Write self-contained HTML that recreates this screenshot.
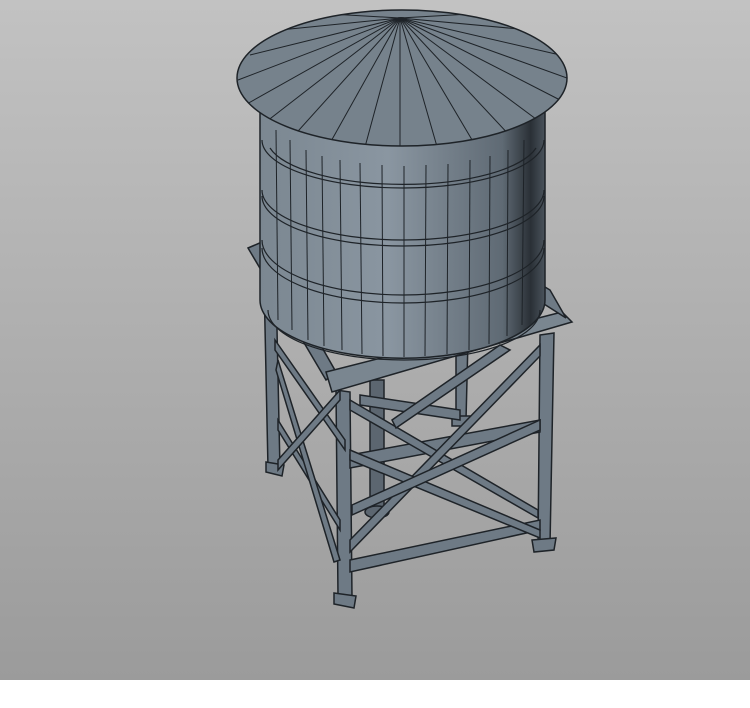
<!DOCTYPE html>
<html><head><style>
html,body{margin:0;padding:0;width:750px;height:708px;overflow:hidden;background:#fff}
.bg{position:absolute;left:0;top:0;width:750px;height:680px;background:linear-gradient(#c2c2c2,#9b9b9b)}
svg{position:absolute;left:0;top:0}
</style></head><body>
<div class="bg"></div>
<svg width="750" height="708" viewBox="0 0 750 708">
<defs>
<linearGradient id="tg" x1="0" x2="1">
<stop offset="0" stop-color="#7b8791"/><stop offset="0.45" stop-color="#8a96a1"/>
<stop offset="0.85" stop-color="#5f6a74"/><stop offset="0.95" stop-color="#2a3036"/><stop offset="1" stop-color="#4a535c"/>
</linearGradient>
<clipPath id="rc"><ellipse cx="402" cy="78" rx="165" ry="68"/></clipPath>
</defs>
<g stroke="#1e2328" stroke-width="1.5" fill="#6e7a85">
<polygon points="264,280 276,282 280,470 268,468"/>
<polygon points="336,390 350,392 352,598 338,596"/>
<polygon points="540,335 554,333 550,545 538,547"/>
<polygon points="456,340 468,340 466,420 456,420"/>
<polygon points="370,380 384,380 384,510 370,510" fill="#5c6670"/>
<ellipse cx="377" cy="512" rx="12" ry="6" fill="#5c6670"/>
<polygon points="266,462 284,465 282,476 266,472"/>
<polygon points="334,593 356,596 354,608 334,604"/>
<polygon points="532,540 556,538 554,550 534,552"/>
<polygon points="452,416 472,416 470,426 452,426"/>
<polygon points="275,340 345,440 345,450 275,350"/>
<polygon points="350,455 540,420 540,432 350,468"/>
<polygon points="350,560 540,520 540,530 350,572"/>
<polygon points="278,420 340,520 340,530 278,430"/>
<polygon points="360,395 460,410 460,420 360,405"/>
<polygon points="350,400 538,510 538,518 350,410"/>
<polygon points="350,540 540,345 540,356 350,552"/>
<polygon points="350,450 540,530 540,538 350,460"/>
<polygon points="352,505 540,420 540,430 352,515"/>
<polygon points="278,360 340,560 334,562 276,370"/>
<polygon points="278,460 340,390 340,400 278,470"/>
<polygon points="392,420 500,345 510,350 396,428"/>
<polygon points="248,248 262,242 336,372 326,380"/>
<polygon points="326,372 562,312 572,322 332,392" fill="#7a8690"/>
<polygon points="460,236 550,290 566,318 544,304"/>
</g>
<path d="M260,105 L545,105 L545,300 A142,58 0 0 1 260,300 Z" fill="url(#tg)" stroke="#1e2328" stroke-width="1.5"/>
<g stroke="#1e2328" stroke-width="1.2" fill="none">
<path d="M262,190 A141,50 0 0 0 544,190"/>
<path d="M262,196 A141,50 0 0 0 544,196"/>
<path d="M262,240 A141,55 0 0 0 544,240"/>
<path d="M262,248 A141,55 0 0 0 544,248"/>
<path d="M268,310 A136,50 0 0 0 540,310"/>
<path d="M262,140 A141,48 0 0 0 544,140"/>
<path d="M270,148 A136,46 0 0 0 536,148"/>
<g stroke-width="1">
<line x1="276" y1="130" x2="278" y2="320"/><line x1="290" y1="140" x2="292" y2="330"/>
<line x1="306" y1="150" x2="308" y2="340"/><line x1="322" y1="156" x2="324" y2="346"/>
<line x1="340" y1="160" x2="342" y2="350"/><line x1="360" y1="163" x2="362" y2="354"/>
<line x1="382" y1="165" x2="383" y2="356"/><line x1="404" y1="166" x2="404" y2="357"/>
<line x1="426" y1="165" x2="425" y2="356"/><line x1="448" y1="164" x2="447" y2="354"/>
<line x1="470" y1="160" x2="469" y2="350"/><line x1="490" y1="156" x2="489" y2="344"/>
<line x1="508" y1="150" x2="507" y2="336"/><line x1="524" y1="140" x2="522" y2="325"/>
</g>
</g>
<ellipse cx="402" cy="78" rx="165" ry="68" fill="#76828c"/>
<g stroke="#1e2328" stroke-width="1" fill="none" clip-path="url(#rc)">
<line x1="400" y1="18" x2="238" y2="80"/><line x1="400" y1="18" x2="245" y2="105"/>
<line x1="400" y1="18" x2="262" y2="125"/><line x1="400" y1="18" x2="290" y2="140"/>
<line x1="400" y1="18" x2="325" y2="152"/><line x1="400" y1="18" x2="362" y2="158"/>
<line x1="400" y1="18" x2="400" y2="160"/><line x1="400" y1="18" x2="440" y2="157"/>
<line x1="400" y1="18" x2="478" y2="150"/><line x1="400" y1="18" x2="512" y2="138"/>
<line x1="400" y1="18" x2="540" y2="122"/><line x1="400" y1="18" x2="560" y2="100"/>
<line x1="400" y1="18" x2="567" y2="78"/><line x1="400" y1="18" x2="560" y2="55"/>
<line x1="400" y1="18" x2="530" y2="30"/><line x1="400" y1="18" x2="250" y2="55"/>
<line x1="400" y1="18" x2="280" y2="30"/><line x1="400" y1="18" x2="330" y2="14"/>
<line x1="400" y1="18" x2="470" y2="14"/>
</g>
<ellipse cx="402" cy="78" rx="165" ry="68" fill="none" stroke="#1e2328" stroke-width="1.5"/>
<ellipse cx="401" cy="19" rx="6" ry="2" fill="#1e2328"/>
</svg>
</body></html>
